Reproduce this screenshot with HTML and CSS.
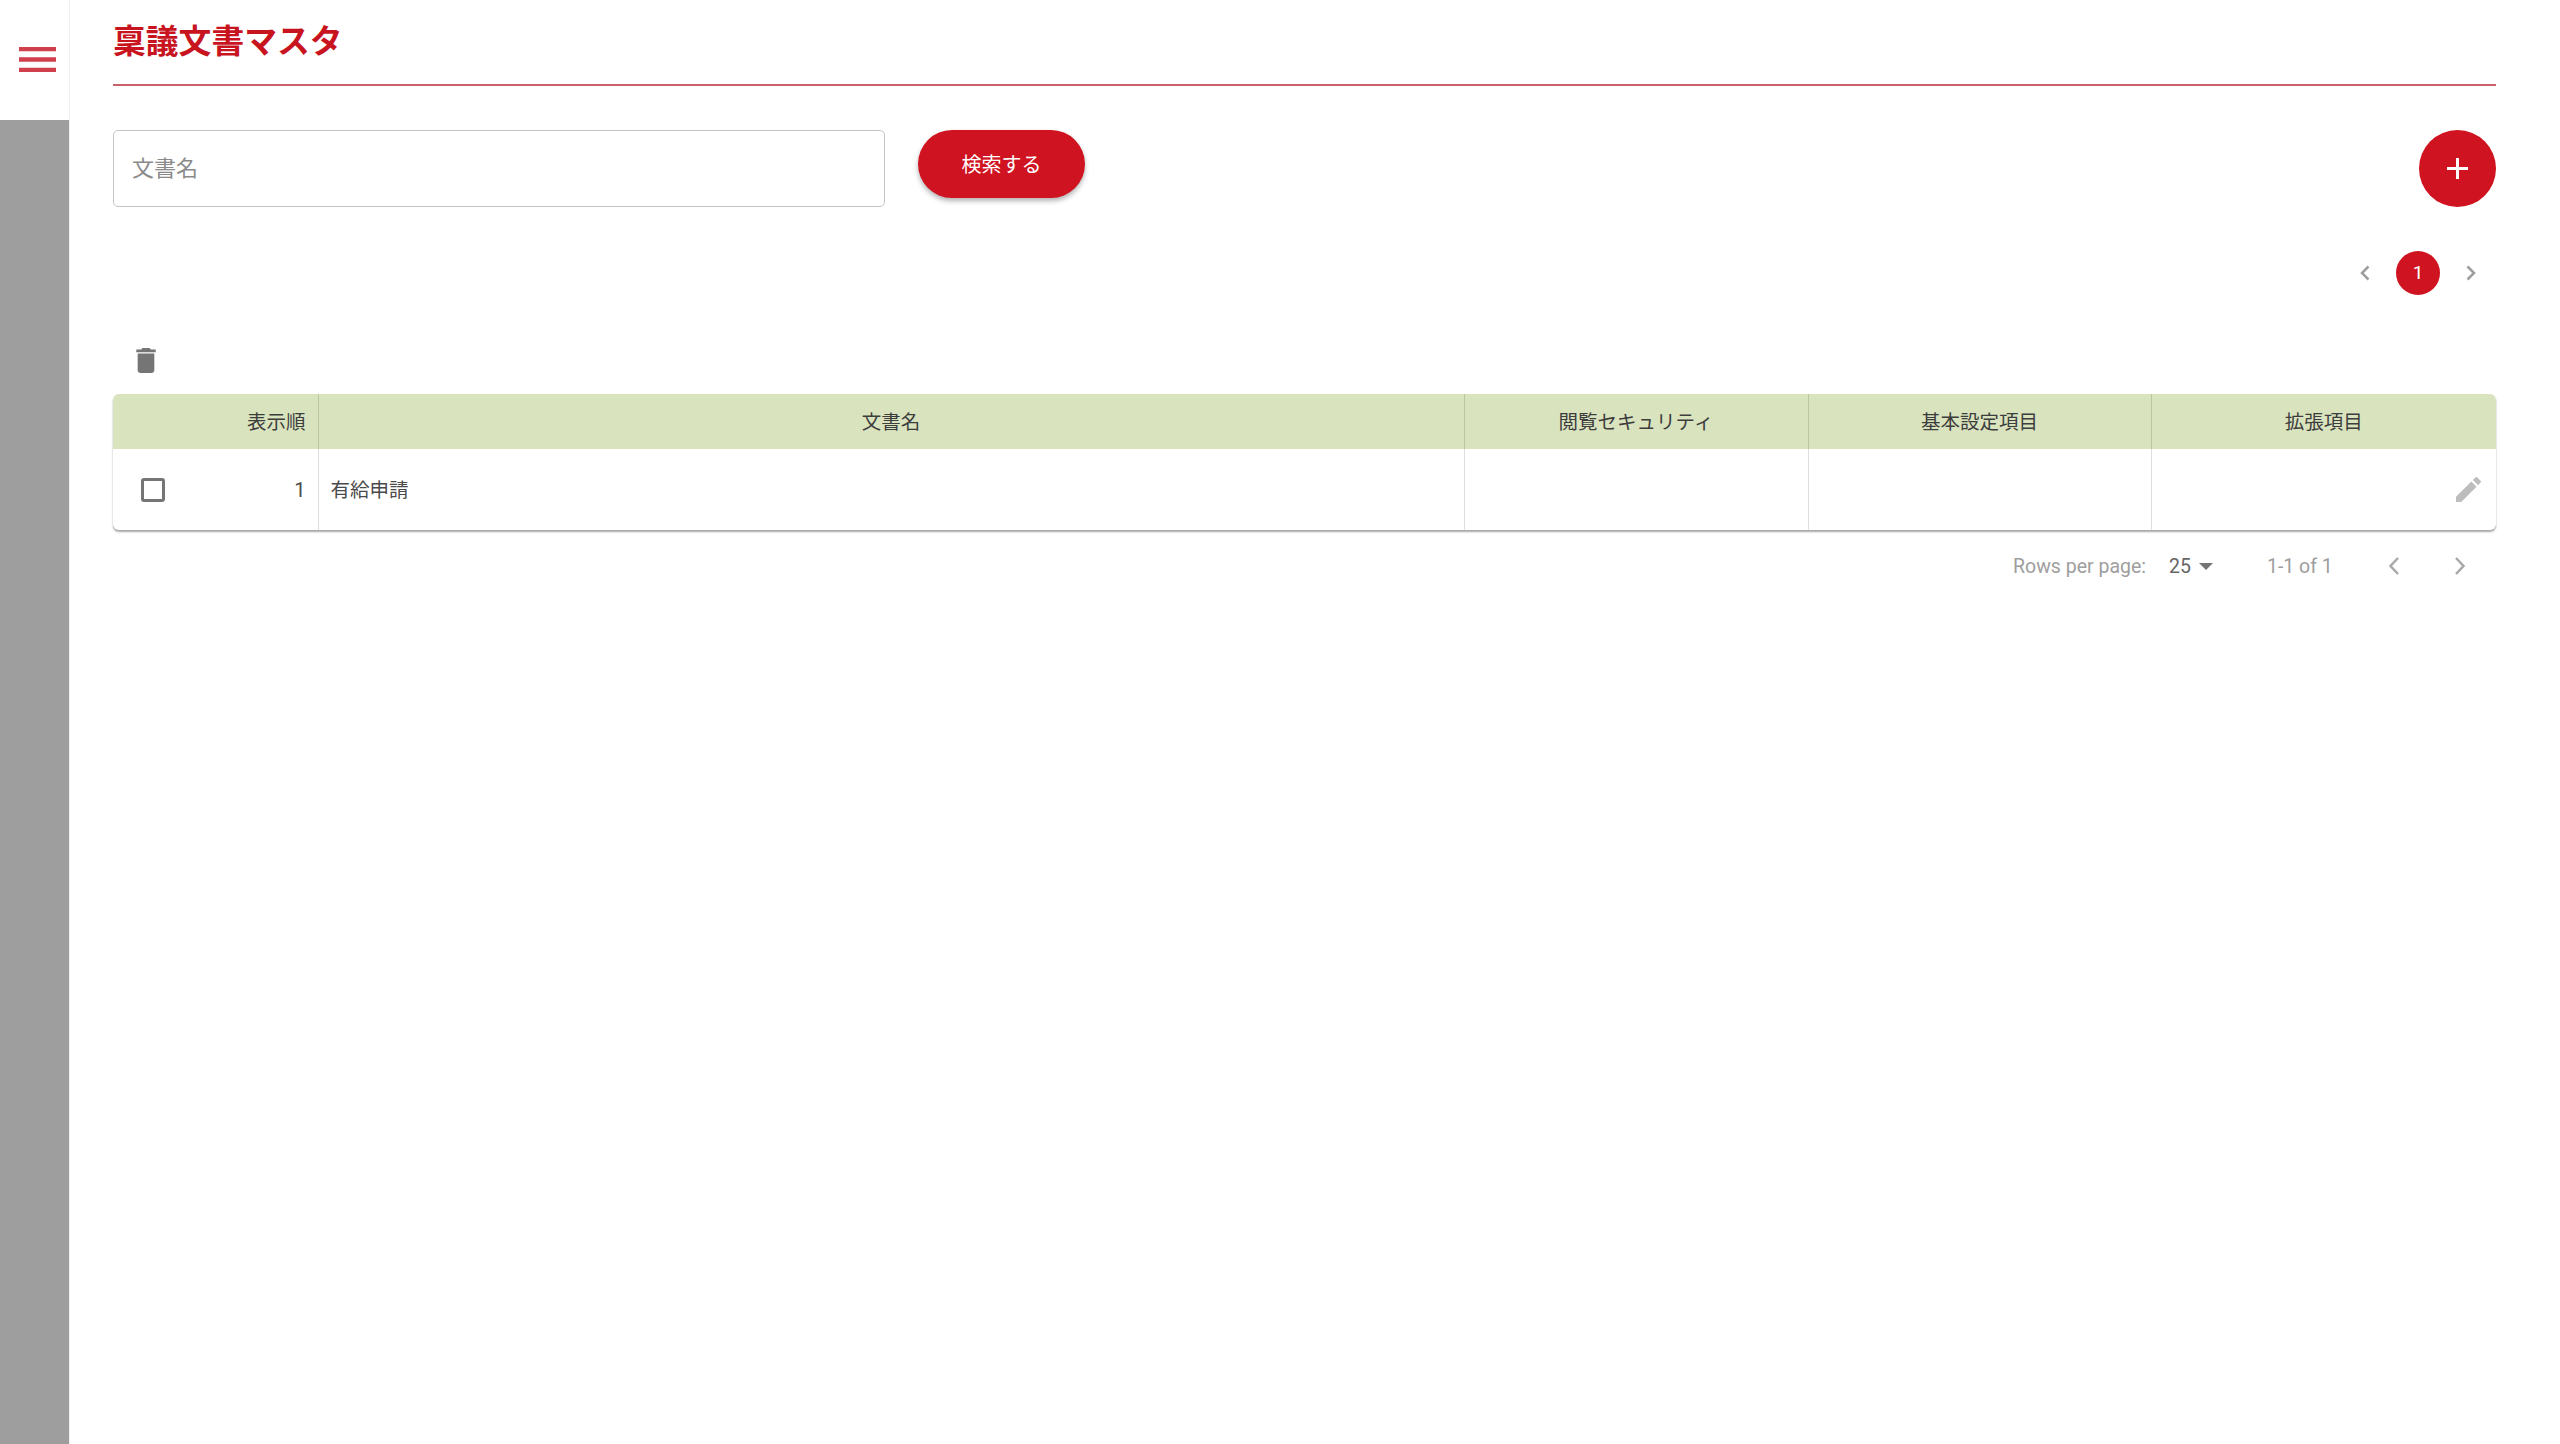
FILE: index.html
```html
<!DOCTYPE html>
<html lang="ja">
<head>
    <meta charset="UTF-8">
    <title>稟議文書マスタ</title>
    <link rel="stylesheet" href="styles.css">
</head>
<body>
    <div class="app">
        <aside class="sidebar">
            <div class="sidebar-top">
                <svg class="menu-icon" viewBox="0 0 37 25"><path d="M0 2h37M0 12.500h37M0 23h37"/></svg>
            </div>
            <div class="sidebar-fill"></div>
        </aside>

        <main class="main">
            <h1 class="title">稟議文書マスタ</h1>

            <div class="search-row">
                <div class="search-input">文書名</div>
                <button class="search-btn">検索する</button>
                <button class="add-btn">
                    <svg viewBox="0 0 21 21"><path d="M10.500 0v21M0 10.500h21"/></svg>
                </button>
            </div>

            <div class="pager">
                <svg class="chev" viewBox="0 0 10 16"><path d="M8.500 1.500 2 8l6.500 6.500"/></svg>
                <span class="page-num">1</span>
                <svg class="chev" viewBox="0 0 10 16"><path d="M1.500 1.500 8 8l-6.500 6.500"/></svg>
            </div>

            <div class="toolbar">
                <svg class="trash" viewBox="5 3 14 18"><path d="M6 19c0 1.100.9 2 2 2h8c1.100 0 2-.9 2-2V7H6v12zM19 4h-3.500l-1-1h-5l-1 1H5v2h14V4z"/></svg>
            </div>

            <div class="table-card">
                <table class="doc-table">
                    <thead>
                        <tr>
                            <th class="col-order">表示順</th>
                            <th class="col-name">文書名</th>
                            <th class="col-security">閲覧セキュリティ</th>
                            <th class="col-basic">基本設定項目</th>
                            <th class="col-ext">拡張項目</th>
                        </tr>
                    </thead>
                    <tbody>
                        <tr>
                            <td class="cell-order">
                                <span class="checkbox"></span>
                                <span class="order-num">1</span>
                            </td>
                            <td>有給申請</td>
                            <td></td>
                            <td></td>
                            <td class="cell-edit">
                                <svg class="pencil" viewBox="3 3 18 18"><path d="M3 17.250V21h3.750L17.810 9.940l-3.750-3.750L3 17.250zM20.710 7.040c.39-.39.39-1.020 0-1.410l-2.340-2.340c-.39-.39-1.020-.39-1.410 0l-1.830 1.830 3.750 3.750 1.830-1.830z"/></svg>
                            </td>
                        </tr>
                    </tbody>
                </table>
            </div>

            <div class="table-footer">
                <span class="rows-label">Rows per page:</span>
                <span class="rows-value">25</span>
                <span class="rows-arrow"></span>
                <span class="rows-range">1-1 of 1</span>
                <svg class="foot-chev" viewBox="0 0 12 20"><path d="M10 2 2.500 10l7.500 8"/></svg>
                <svg class="foot-chev next" viewBox="0 0 12 20"><path d="M2 2l7.500 8L2 18"/></svg>
            </div>
        </main>
    </div>
</body>
</html>
```

FILE: styles.css
```css
html, body {
    margin: 0;
    height: 100%;
    background-color: #fff;
}
body {
    font-family: Roboto, "Noto Sans CJK JP", sans-serif;
    color: #333;
    overflow: hidden;
}
.app {
    display: flex;
    height: 100%;
}
.sidebar {
    width: 69px;
    flex-shrink: 0;
    display: flex;
    flex-direction: column;
    border-right: 1px solid #f0f0f0;
}
.sidebar-top {
    height: 120px;
    padding: 47px 0 0 19px;
    box-sizing: border-box;
}
.menu-icon {
    display: block;
    width: 37px;
    height: 25px;
    fill: none;
    stroke: #d0404c;
    stroke-width: 4.500;
}
.sidebar-fill {
    flex: 1;
    background-color: #9e9e9e;
}
.main {
    flex: 1;
    padding: 0 64px 0 43px;
    min-width: 0;
}
.title {
    margin: 0;
    height: 84px;
    border-bottom: 2px solid #c9606a;
    font-size: 32.800px;
    font-weight: 700;
    line-height: 84px;
    color: #c8141f;
}
.search-row {
    display: flex;
    align-items: flex-start;
    margin-top: 44px;
}
.search-input {
    width: 772px;
    height: 77px;
    box-sizing: border-box;
    border: 1px solid #c4c4c4;
    border-radius: 5px;
    padding-left: 18px;
    font-size: 22px;
    line-height: 75px;
    color: #8a8a8a;
}
.search-btn {
    width: 167px;
    height: 68px;
    margin-left: 33px;
    padding: 0 0 2px;
    border: none;
    border-radius: 34px;
    background-color: #cf1320;
    box-shadow: 0 3px 5px rgba(0, 0, 0, 0.3);
    color: #fff;
    font-family: inherit;
    font-size: 20px;
}
.add-btn {
    width: 77px;
    height: 77px;
    margin-left: auto;
    padding: 0;
    border: none;
    border-radius: 50%;
    background-color: #cf1320;
    display: flex;
    align-items: center;
    justify-content: center;
}
.add-btn svg {
    width: 21px;
    height: 21px;
    fill: none;
    stroke: #fff;
    stroke-width: 3;
}
.pager {
    display: flex;
    align-items: center;
    justify-content: flex-end;
    gap: 26px;
    margin-top: 44px;
    padding-right: 20px;
}
.chev {
    width: 10px;
    height: 16px;
    fill: none;
    stroke: #9e9e9e;
    stroke-width: 2.500;
}
.page-num {
    width: 44px;
    height: 44px;
    border-radius: 50%;
    background-color: #cf1320;
    color: #fff;
    font-size: 19px;
    line-height: 44px;
    text-align: center;
}
.toolbar {
    height: 99px;
    padding-left: 23px;
    box-sizing: border-box;
    padding-top: 53px;
}
.trash {
    display: block;
    width: 20px;
    height: 25px;
    fill: #757575;
}
.table-card {
    border-radius: 6px;
    box-shadow: 0 2px 2px rgba(0, 0, 0, 0.35);
    overflow: hidden;
}
.doc-table {
    width: 100%;
    border-collapse: collapse;
    table-layout: fixed;
}
.doc-table th {
    height: 55px;
    padding: 0 0 2px;
    box-sizing: border-box;
    background-color: #d9e4bf;
    border-left: 1px solid #b9c7a3;
    font-size: 19.500px;
    font-weight: 400;
    color: #3d3d3d;
}
.doc-table td {
    height: 81px;
    padding: 0 12px 2px;
    box-sizing: border-box;
    border-left: 1px solid #dedede;
    font-size: 19.500px;
    color: #4a4a4a;
}
.doc-table th:first-child,
.doc-table td:first-child {
    border-left: none;
}
.doc-table th.col-order {
    width: 205px;
    padding-right: 12px;
    text-align: right;
}
.col-security,
.col-ext {
    width: 345px;
}
.doc-table th.col-security {
    width: 344px;
}
.col-basic {
    width: 343px;
}
.doc-table td.cell-order {
    padding: 0 12px 0 28px;
}
.cell-order {
    display: flex;
    align-items: center;
    justify-content: space-between;
}
.checkbox {
    width: 18px;
    height: 18px;
    border: 3px solid #757575;
    border-radius: 3px;
}
.order-num {
    font-size: 20px;
}
.doc-table td.cell-edit {
    padding: 0 15px 0 0;
}
.pencil {
    display: block;
    width: 25px;
    height: 25px;
    margin-left: auto;
    fill: #bdbdbd;
}
.table-footer {
    display: flex;
    align-items: center;
    height: 72px;
    padding-left: 1900px;
    font-size: 19.500px;
    color: #9e9e9e;
}
.rows-value {
    margin-left: 23px;
    color: #666;
}
.rows-arrow {
    width: 0;
    height: 0;
    margin-left: 8px;
    border-left: 7px solid transparent;
    border-right: 7px solid transparent;
    border-top: 7px solid #757575;
}
.rows-range {
    margin-left: 54px;
}
.foot-chev {
    width: 12px;
    height: 20px;
    margin-left: 55px;
    fill: none;
    stroke: #a8a8a8;
    stroke-width: 2.500;
}
.foot-chev.next {
    margin-left: 54px;
}
```
